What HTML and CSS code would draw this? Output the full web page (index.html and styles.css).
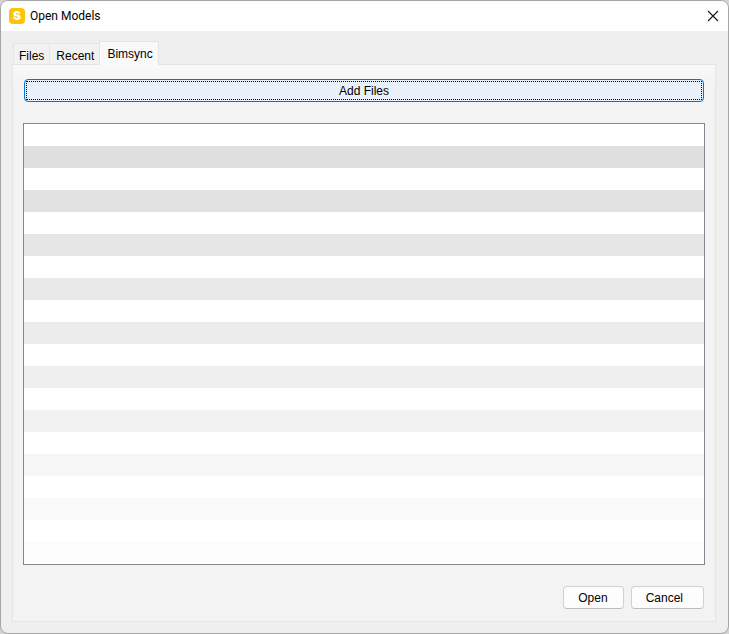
FILE: index.html
```html
<!DOCTYPE html>
<html lang="en">
<head>
<meta charset="utf-8">
<title>Open Models</title>
<link rel="stylesheet" href="styles.css">
</head>
<body>
<main class="dialog">
  <header class="titlebar">
    <span class="logo" aria-hidden="true">S</span>
    <h1 class="title">Open Models</h1>
    <button class="close" type="button" aria-label="Close">
      <svg width="12" height="12" viewBox="0 0 12 12"><path d="M1 1 11 11M11 1 1 11" fill="none" stroke="#1a1a1a" stroke-width="1.2"/></svg>
    </button>
  </header>
  <div class="content">
    <div class="tabs" role="tablist">
      <button class="tab" type="button" role="tab" aria-selected="false">Files</button>
      <button class="tab" type="button" role="tab" aria-selected="false">Recent</button>
      <button class="tab active" type="button" role="tab" aria-selected="true">Bimsync</button>
    </div>
    <section class="panel">
      <button class="add" type="button"><span class="focus">Add Files</span></button>
      <ul class="files">
        <li></li><li></li><li></li><li></li><li></li>
        <li></li><li></li><li></li><li></li><li></li>
        <li></li><li></li><li></li><li></li><li></li>
        <li></li><li></li><li></li><li></li><li></li>
      </ul>
      <footer class="actions">
        <button class="action" type="button">Open</button>
        <button class="action cancel" type="button">Cancel</button>
      </footer>
    </section>
  </div>
</main>
</body>
</html>
```
FILE: styles.css
```css
* {
  box-sizing: border-box;
}

body {
  margin: 0;
  background: #d4d4d4;
  color: #000;
  font: 12px/16px "Liberation Sans", Arial, sans-serif;
}

button {
  margin: 0;
  padding: 0;
  color: inherit;
  font: inherit;
}

.dialog {
  display: flex;
  flex-direction: column;
  min-height: 100vh;
  overflow: hidden;
  border: 1px solid #a6a6a6;
  border-radius: 8px;
  background: #efefef;
}

.titlebar {
  display: flex;
  align-items: center;
  height: 30px;
  padding: 0 9px 0 8px;
  background: #fff;
}

.logo {
  width: 16px;
  height: 16px;
  margin-right: 5px;
  border-radius: 4px;
  background: #fdc30a;
  color: #fff;
  font: 900 12px/16px Inter, sans-serif;
  text-align: center;
}

.title {
  flex: 1;
  margin: 0;
  font: 12px/16px Roboto, "Open Sans", sans-serif;
}

.close {
  display: flex;
  border: 0;
  background: none;
}

.content {
  display: flex;
  flex: 1;
  flex-direction: column;
  padding: 10px 12px 11px 11px;
}

.tabs {
  display: flex;
  align-items: flex-end;
  padding-left: 1px;
}

.tab {
  height: 21px;
  padding: 4px 5px 0;
  border: 1px solid #e5e5e5;
  border-width: 1px 0 0 1px;
  background: #f2f2f2;
}

.tab + .tab {
  padding-left: 6px;
}

.tab.active {
  z-index: 1;
  height: 24px;
  margin-bottom: -1px;
  padding: 0 5px 0 7px;
  border-width: 1px 1px 0;
  background: #f9f9f9;
}

.panel {
  display: flex;
  flex: 1;
  flex-direction: column;
  padding: 14px 11px 12px;
  border: 1px solid #e5e5e5;
  background: linear-gradient(#f9f9f9, #f3f3f3 20px);
}

.add {
  height: 23px;
  padding: 1px;
  border: 1px solid #0078d4;
  border-radius: 4px;
  background: #e8f1fa;
}

.focus {
  display: block;
  height: 19px;
  border: 1px dotted #000;
  line-height: 18px;
}

.files {
  margin: 21px -1px;
  padding: 0;
  border: 1px solid #828790;
  background: #fff;
  list-style: none;
}

.files li {
  height: 22px;
}

.files li:nth-child(2) { background: #dfdfdf; }
.files li:nth-child(4) { background: #e2e2e2; }
.files li:nth-child(6) { background: #e6e6e6; }
.files li:nth-child(8) { background: #e9e9e9; }
.files li:nth-child(10) { background: #ececec; }
.files li:nth-child(12) { background: #efefef; }
.files li:nth-child(14) { background: #f2f2f2; }
.files li:nth-child(16) { background: #f6f6f6; }
.files li:nth-child(18) { background: #f9f9f9; }
.files li:nth-child(20) { background: #fcfcfc; }

.actions {
  display: flex;
  justify-content: flex-end;
  gap: 7px;
}

.action {
  height: 23px;
  padding: 0 15px 0 14px;
  border: 1px solid #d0d0d0;
  border-bottom-color: #bcbcbc;
  border-radius: 4px;
  background: #fdfdfd;
}

.cancel {
  padding-right: 20px;
}
```
